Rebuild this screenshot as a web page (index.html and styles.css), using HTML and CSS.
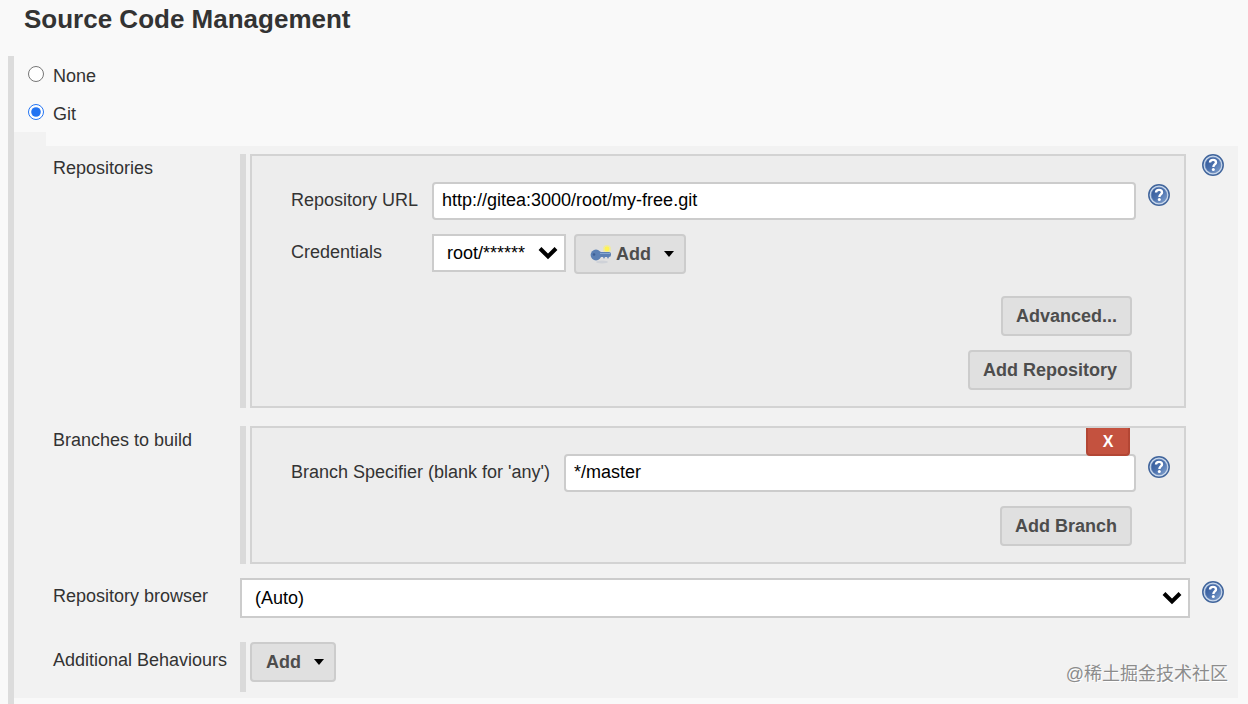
FILE: index.html
```html
<!DOCTYPE html>
<html lang="en">
  <head>
    <meta charset="UTF-8" />
    <meta name="viewport" content="width=device-width, initial-scale=1.0" />
    <title>Source Code Management</title>
    <link rel="stylesheet" href="styles.css">
  </head>
  <body>
    <!-- shared icons -->
    <svg class="sprite" aria-hidden="true">
      <defs>
        <linearGradient id="blue" x1="0" y1="0" x2="1" y2="1">
          <stop offset="0" stop-color="#2f5596" />
          <stop offset="0.5" stop-color="#4a70ad" />
          <stop offset="1" stop-color="#86a6d2" />
        </linearGradient>
      </defs>
      <symbol id="help" viewBox="0 0 22 22">
        <circle cx="11" cy="11" r="10.2" fill="#c9d8ec" stroke="#41659c" stroke-width="1.5" />
        <circle cx="11" cy="11" r="7.8" fill="url(#blue)" stroke="#5a7cb2" stroke-width="0.6" />
        <path d="M8 8.600C8 6.700 9.300 5.900 11 5.900s3 .9 3 2.500c0 2-2.600 2.200-2.600 4.500" fill="none" stroke="#fff" stroke-width="2.4" />
        <circle cx="11.3" cy="15.6" r="1.5" fill="#fff" />
      </symbol>
    </svg>

    <h1>Source Code Management</h1>

    <main class="scm">
      <div class="choice">
        <input type="radio" name="scm" id="scm-none" />
        <label for="scm-none">None</label>
      </div>
      <div class="choice">
        <input type="radio" name="scm" id="scm-git" checked />
        <label for="scm-git">Git</label>
      </div>

      <div class="tab"></div>
      <section class="panel">
        <div class="row repositories">
          <h2 class="name">Repositories</h2>
          <div class="repeat">
            <div class="box">
              <div class="field">
                <label for="url">Repository URL</label>
                <input class="text" type="text" id="url" value="http://gitea:3000/root/my-free.git" />
                <button class="help" aria-label="Help for Repository URL"><svg><use href="#help" /></svg></button>
              </div>
              <div class="field credentials">
                <label for="credentials">Credentials</label>
                <div class="controls">
                  <select id="credentials">
                    <option>root/******</option>
                  </select>
                  <button class="btn menu">
                    <svg class="key" viewBox="0 0 22 20" aria-hidden="true">
                      <ellipse cx="12" cy="18" rx="6" ry="1.5" fill="#cfd2d8" />
                      <circle cx="17" cy="5" r="4" fill="#eee9a4" />
                      <circle cx="17" cy="5" r="2.4" fill="#fff352" />
                      <circle cx="6" cy="11" r="5.4" fill="#5b80b4" />
                      <rect x="8" y="8" width="13" height="5" rx="2" fill="#5b80b4" />
                      <path d="M13 13h2l-1 2zM17 13h2l-1 2z" fill="#5b80b4" />
                      <path d="M10 9.500h10" stroke="#86a6d2" />
                      <circle cx="4" cy="10.5" r="1.300" fill="#3c5f96" />
                    </svg>
                    Add
                    <span class="caret"></span>
                  </button>
                </div>
              </div>
              <div class="actions">
                <button class="btn">Advanced...</button>
                <button class="btn">Add Repository</button>
              </div>
            </div>
          </div>
          <button class="help" aria-label="Help for Repositories"><svg><use href="#help" /></svg></button>
        </div>

        <div class="row branches">
          <h2 class="name">Branches to build</h2>
          <div class="repeat">
            <div class="box">
              <button class="delete" aria-label="Delete branch">X</button>
              <div class="field wide">
                <label for="branch">Branch Specifier (blank for 'any')</label>
                <input class="text" type="text" id="branch" value="*/master" />
                <button class="help" aria-label="Help for Branch Specifier"><svg><use href="#help" /></svg></button>
              </div>
              <div class="actions">
                <button class="btn">Add Branch</button>
              </div>
            </div>
          </div>
        </div>

        <div class="row browser">
          <label class="name" for="browser">Repository browser</label>
          <select id="browser">
            <option>(Auto)</option>
          </select>
          <button class="help" aria-label="Help for Repository browser"><svg><use href="#help" /></svg></button>
        </div>

        <div class="row behaviours">
          <h2 class="name">Additional Behaviours</h2>
          <div class="repeat">
            <button class="btn menu">Add <span class="caret"></span></button>
          </div>
        </div>
      </section>
    </main>

    <p class="watermark" lang="zh">@稀土掘金技术社区</p>
  </body>
</html>
```
FILE: styles.css
```css
* {
  margin: 0;
  padding: 0;
  box-sizing: border-box;
}

body {
  display: flex;
  flex-direction: column;
  min-height: 100vh;
  background-color: #f9f9f9;
  color: #333;
  font-family: "Liberation Sans", Arial, sans-serif;
  font-size: 18px;
  line-height: 28px;
}

button,
input,
select {
  font: inherit;
}

h1 {
  padding: 0 24px;
  margin-bottom: 18px;
  font-size: 26px;
  line-height: 38px;
}

.sprite {
  position: absolute;
  width: 0;
  height: 0;
}

.scm {
  flex: 1;
  margin: 0 10px 0 8px;
  border-left: 6px solid #dcdcdc;
}

.choice {
  display: flex;
  align-items: center;
  gap: 9px;
  height: 38px;
  padding-left: 14px;
}

.choice input {
  width: 16px;
  height: 16px;
  margin-bottom: 2px;
  accent-color: #2374f2;
}

.choice label {
  padding-top: 2px;
}

.tab {
  width: 32px;
  height: 14px;
  background-color: #f2f2f2;
}

.panel {
  padding: 8px 14px 6px 39px;
  background-color: #f2f2f2;
}

.row {
  display: grid;
  grid-template-columns: 175px 1fr 22px;
  column-gap: 12px;
  align-items: start;
}

.name {
  font-size: 18px;
  font-weight: 400;
  white-space: nowrap;
}

.repeat {
  margin-right: 4px;
  padding-left: 4px;
  border-left: 6px solid #dadada;
}

.branches {
  margin-top: 18px;
}

.browser {
  margin-top: 14px;
}

.behaviours {
  margin-top: 24px;
}

.browser .name,
.behaviours .name,
.field label {
  line-height: 36px;
}

.behaviours .repeat {
  padding-bottom: 10px;
}

.box {
  position: relative;
  padding: 26px 14px 16px 39px;
  border: 2px solid #d3d3d3;
  background-color: #ededed;
}

.field {
  display: grid;
  grid-template-columns: 129px 1fr 22px;
  column-gap: 12px;
  align-items: start;
}

.field.wide {
  grid-template-columns: 261px 1fr 22px;
}

.credentials {
  margin-top: 14px;
}

.controls {
  display: flex;
  align-items: flex-start;
  gap: 8px;
}

.text {
  width: 100%;
  height: 38px;
  padding: 0 8px 2px;
  border: 2px solid #ccc;
  border-radius: 4px;
  background-color: #fff;
  color: #000;
}

select {
  appearance: none;
  height: 38px;
  padding: 0 40px 0 13px;
  border: 2px solid #ccc;
  border-radius: 0;
  background: #fff url("data:image/svg+xml,%3Csvg xmlns='http://www.w3.org/2000/svg' width='20' height='14'%3E%3Cpath d='M2 2.500l8 8 8-8' fill='none' stroke='%23000' stroke-width='4'/%3E%3C/svg%3E") no-repeat right 6px center;
  color: #000;
}

#credentials {
  width: 134px;
  padding-right: 30px;
}

#browser {
  width: 100%;
  height: 40px;
}

.btn {
  height: 40px;
  padding: 0 13px;
  border: 2px solid #ccc;
  border-radius: 4px;
  background-color: #e0e0e0;
  color: #4d4d4d;
  font-weight: 700;
}

.menu {
  display: flex;
  align-items: center;
  padding: 0 10px 0 14px;
}

.key {
  width: 22px;
  height: 20px;
  margin-right: 4px;
}

.caret {
  margin-left: 13px;
  border: 5px solid transparent;
  border-top: 6px solid #000;
  border-bottom: 0;
}

.actions {
  display: flex;
  flex-direction: column;
  align-items: flex-end;
  gap: 14px;
  margin-top: 22px;
  padding-right: 38px;
}

.branches .actions {
  margin-top: 14px;
}

.help {
  width: 22px;
  height: 22px;
  border: none;
  background: none;
}

.field .help {
  margin-top: 2px;
}

.browser .help {
  margin-top: 3px;
}

.help svg {
  display: block;
  width: 22px;
  height: 22px;
}

.delete {
  position: absolute;
  top: 0;
  right: 54px;
  width: 44px;
  height: 28px;
  border: 2px solid #b34634;
  border-top: 0;
  border-radius: 0 0 4px 4px;
  background-color: #c4523f;
  color: #fff;
  font-size: 16px;
  font-weight: 700;
}

.watermark {
  position: absolute;
  right: 20px;
  bottom: 16px;
  color: #8c8c8c;
  font-family: "Liberation Sans", "Noto Sans CJK SC", sans-serif;
  text-shadow: 1px 1px 0 #fff;
}
```
